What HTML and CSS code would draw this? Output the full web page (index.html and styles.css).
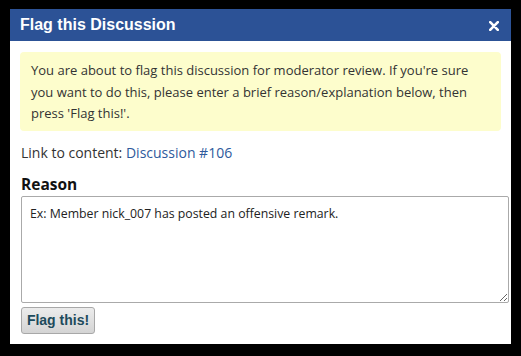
FILE: index.html
```html
<!DOCTYPE html>
<html lang="en">
<head>
  <meta charset="UTF-8">
  <title>Flag this Discussion</title>
  <link rel="stylesheet" href="styles.css">
</head>
<body>
  <div class="dialog">
    <div class="dialog-header">
      <span class="dialog-title">Flag this Discussion</span>
      <a class="dialog-close" href="#" title="Close">
        <svg width="10" height="10" viewBox="0 0 10 10">
          <path d="M1.2 1.2 L8.8 8.8 M8.8 1.2 L1.2 8.8" stroke="#fff" stroke-width="2.6" stroke-linecap="round"/>
        </svg>
      </a>
    </div>

    <div class="dialog-body">
      <div class="notice">
        You are about to flag this discussion for moderator review. If you're sure
        you want to do this, please enter a brief reason/explanation below, then
        press 'Flag this!'.
      </div>

      <p class="link-row">Link to content: <a href="#">Discussion #106</a></p>

      <label class="reason-label" for="reason">Reason</label>
      <textarea id="reason" class="reason-box">Ex: Member nick_007 has posted an offensive remark.</textarea>

      <button class="flag-btn">Flag this!</button>
    </div>
  </div>
</body>
</html>
```

FILE: styles.css
```css
body {
  margin: 0;
  background-color: #000;
  font-family: "Open Sans", sans-serif;
}

.dialog {
  width: 501px;
  height: 335px;
  margin: 9px 0 0 10px;
  background-color: #fff;
}

.dialog-header {
  height: 32px;
  background-color: #2c5296;
  padding: 0 12px 0 10px;
  display: flex;
  align-items: center;
  justify-content: space-between;
}

.dialog-title {
  color: #fff;
  font-family: "Liberation Sans", Arial, sans-serif;
  font-weight: bold;
  font-size: 16px;
}

.dialog-close {
  display: flex;
  margin-top: 2px;
}

.dialog-body {
  padding: 11px 10px 0 10px;
  color: #333;
  font-size: 13px;
}

.notice {
  background-color: #fdfdcc;
  border-radius: 4px;
  padding: 8px 10px 6px 11px;
  line-height: 21.6px;
}

.link-row {
  margin: 12px 0 0 1px;
  font-size: 14px;
  line-height: 20px;
}

.link-row a {
  color: #2e5a9c;
  text-decoration: none;
}

.reason-label {
  display: block;
  margin: 11px 0 0 1px;
  font-weight: bold;
  font-size: 15.5px;
  line-height: 20px;
  color: #111;
}

.reason-box {
  display: block;
  box-sizing: border-box;
  width: 488px;
  height: 107px;
  margin: 2px 0 0 1px;
  padding: 8px 8px;
  border: 1px solid #aaa;
  border-radius: 2px;
  font-family: "Open Sans", sans-serif;
  font-size: 12.3px;
  line-height: 18px;
  color: #222;
}

.flag-btn {
  display: block;
  margin: 4px 0 0 1px;
  width: 74px;
  height: 27px;
  padding: 0;
  border: 1px solid #a8a8a8;
  border-radius: 3px;
  background: linear-gradient(#ececec, #d4d4d4);
  font-family: "Liberation Sans", Arial, sans-serif;
  font-weight: bold;
  font-size: 14px;
  color: #1d4b5c;
}
```
